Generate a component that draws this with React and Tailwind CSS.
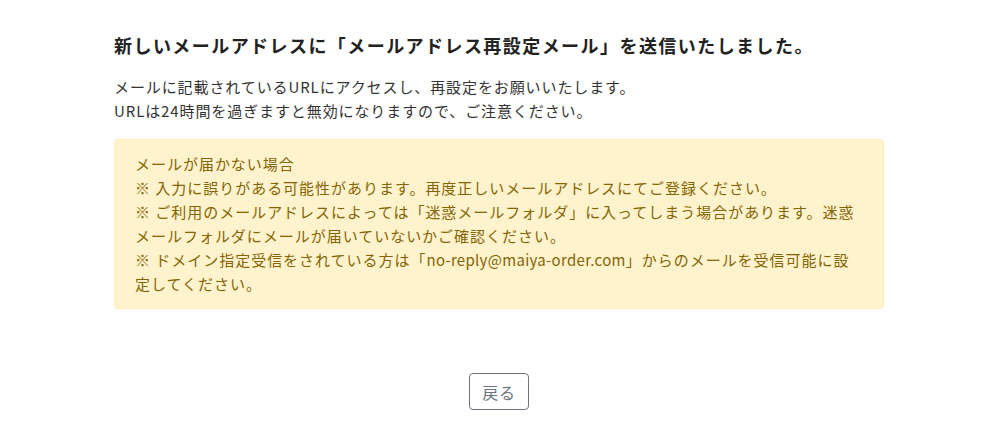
export default function App() {
  return (
    <div
      className="min-h-screen bg-white text-[#212529] tracking-[0.05em]"
      style={{ fontFamily: '"Noto Sans CJK JP", "Noto Sans", sans-serif' }}
    >
      <div className="mx-auto w-[770px] pt-8">
        <h1 className="text-[18px] font-bold leading-[27px] tracking-[0.08em] text-[#222]">
          新しいメールアドレスに「メールアドレス再設定メール」を送信いたしました。
        </h1>

        <p className="mt-4 text-[15px] leading-6 tracking-[0.06em] text-[#333]">
          メールに記載されているURLにアクセスし、再設定をお願いいたします。
          <br />
          URLは24時間を過ぎますと無効になりますので、ご注意ください。
        </p>

        <div className="mt-4 rounded border border-[#ffeeba] bg-[#fff3cd] px-5 py-3 text-[15px] leading-6 tracking-[0.065em] text-[#856404]">
          <p>メールが届かない場合</p>
          <p>※ 入力に誤りがある可能性があります。再度正しいメールアドレスにてご登録ください。</p>
          <p>※ ご利用のメールアドレスによっては「迷惑メールフォルダ」に入ってしまう場合があります。迷惑メールフォルダにメールが届いていないかご確認ください。</p>
          <p>
            ※ ドメイン指定受信をされている方は「<span className="tracking-[0.02em]">no-reply@maiya-order.com</span>」からのメールを受信可能に設
            <br />
            定してください。
          </p>
        </div>

        <div className="mt-16 flex justify-center">
          <button className="h-[37px] rounded border border-[#6c757d] px-3 text-[16px] text-[#6c757d]">
            戻る
          </button>
        </div>
      </div>
    </div>
  );
}
